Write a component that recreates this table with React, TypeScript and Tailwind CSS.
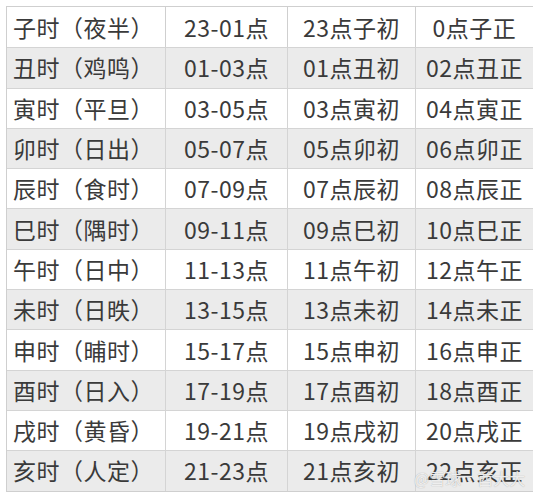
import * as React from "react";

const rows: Array<[string, string, string, string]> = [
  ["子时（夜半）", "23-01点", "23点子初", "0点子正"],
  ["丑时（鸡鸣）", "01-03点", "01点丑初", "02点丑正"],
  ["寅时（平旦）", "03-05点", "03点寅初", "04点寅正"],
  ["卯时（日出）", "05-07点", "05点卯初", "06点卯正"],
  ["辰时（食时）", "07-09点", "07点辰初", "08点辰正"],
  ["巳时（隅时）", "09-11点", "09点巳初", "10点巳正"],
  ["午时（日中）", "11-13点", "11点午初", "12点午正"],
  ["未时（日昳）", "13-15点", "13点未初", "14点未正"],
  ["申时（晡时）", "15-17点", "15点申初", "16点申正"],
  ["酉时（日入）", "17-19点", "17点酉初", "18点酉正"],
  ["戌时（黄昏）", "19-21点", "19点戌初", "20点戌正"],
  ["亥时（人定）", "21-23点", "21点亥初", "22点亥正"],
];

export default function App() {
  return (
    <div className="relative w-[539px] h-[500px] bg-white overflow-hidden [font-family:'Noto_Sans_CJK_SC','Noto_Sans',sans-serif] text-[#3a3a3a]">
      <div className="pt-[6px] pl-[6px]">
        <div className="w-[527px] border border-[#cfcfcf] grid grid-cols-[158px_122px_128px_118px] auto-rows-[40.3px]">
          {rows.map((r, i) => (
            <React.Fragment key={i}>
              {r.map((cell, j) => (
                <div
                  key={j}
                  className={
                    (i % 2 === 1 ? "bg-[#ebebeb] " : "bg-white ") +
                    (i > 0 ? "border-t border-[#d4d4d4] " : "") +
                    (j > 0 ? "border-l border-[#cfcfcf] justify-center " : "pl-[6px] ") +
                    "flex items-center text-[23px] leading-none tracking-[0.5px]"
                  }
                >
                  {cell}
                </div>
              ))}
            </React.Fragment>
          ))}
        </div>
      </div>

      {/* watermark */}
      <div className="absolute left-[414px] top-[470px] text-[16px] leading-none text-white/80 [text-shadow:0_0_1px_#9a9a9a] whitespace-nowrap">
        @雪球·酋大大
      </div>
    </div>
  );
}
